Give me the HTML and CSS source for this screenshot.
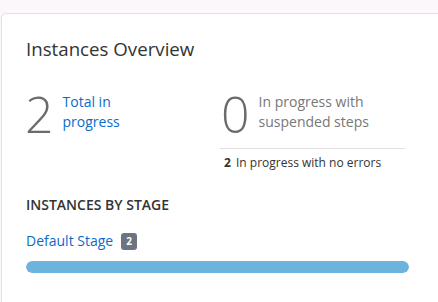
FILE: index.html
```html
<!DOCTYPE html>
<html lang="en">
<head>
    <meta charset="UTF-8">
    <meta name="viewport" content="width=device-width, initial-scale=1.0">
    <title>Instances Overview</title>
    <link rel="stylesheet" href="styles.css">
</head>
<body>
    <div class="card">
        <h2 class="card-title">Instances Overview</h2>

        <div class="stats">
            <div class="stat">
                <span class="stat-number">2</span>
                <a href="#" class="stat-label link">Total in progress</a>
            </div>
            <div class="stat-col">
                <div class="stat">
                    <span class="stat-number">0</span>
                    <span class="stat-label muted">In progress with suspended steps</span>
                </div>
                <div class="stat-sub">
                    <strong>2</strong> In progress with no errors
                </div>
            </div>
        </div>

        <h3 class="section-title">INSTANCES BY STAGE</h3>
        <div class="stage">
            <a href="#" class="link">Default Stage</a>
            <span class="badge">2</span>
        </div>
        <div class="bar">
            <div class="bar-fill" style="width: 100%"></div>
        </div>
    </div>
</body>
</html>
```

FILE: styles.css
```css
body {
    margin: 0;
    background: #fcf7fb;
    font-family: "Open Sans", Arial, sans-serif;
    color: #333;
    overflow: hidden;
}

.card {
    margin: 13px 0 0 1px;
    width: 480px;
    height: 320px;
    box-sizing: border-box;
    padding: 23px 24px 0 24px;
    background: #fff;
    border: 1px solid #e2e0e2;
    border-radius: 5px;
}

.card-title {
    margin: 0;
    font-size: 18.7px;
    font-weight: 400;
    line-height: 24px;
    color: #333;
}

.stats {
    display: grid;
    grid-template-columns: 194px 185px;
    margin-top: 28px;
}

.stat {
    display: flex;
    align-items: flex-start;
    gap: 9px;
}

.stat-number {
    font-size: 50px;
    font-weight: 300;
    line-height: 50px;
    color: #6b6b6b;
    margin-left: -1px;
}

.stat-label {
    margin-top: 3px;
    font-size: 14px;
    line-height: 20px;
    width: 70px;
}

.link {
    color: #0b6bcb;
    text-decoration: none;
}

.muted {
    color: #777;
}

.stat-col .stat {
    padding-left: 2px;
    padding-bottom: 9px;
    border-bottom: 1px solid #e0e0e0;
}

.stat-col .stat-label {
    width: 150px;
}

.stat-sub {
    padding: 6px 0 0 4px;
    font-size: 12px;
    line-height: 16px;
    color: #333;
}

.stat-sub strong {
    font-weight: 700;
    margin-right: 2px;
}

.section-title {
    margin: 25px 0 0;
    font-size: 14px;
    font-weight: 600;
    line-height: 18px;
    color: #333;
}

.stage {
    display: flex;
    align-items: center;
    gap: 8px;
    margin-top: 17px;
    font-size: 14px;
    line-height: 20px;
}

.badge {
    display: inline-block;
    width: 16px;
    height: 17px;
    border-radius: 3px;
    background: #6c757f;
    color: #fff;
    font-size: 10px;
    font-weight: 700;
    line-height: 17px;
    text-align: center;
}

.bar {
    margin-top: 10px;
    width: 383px;
    height: 12px;
    border-radius: 6px;
    background: #e9ecef;
    overflow: hidden;
}

.bar-fill {
    height: 100%;
    border-radius: 6px;
    background: #6cb4dd;
}
```
